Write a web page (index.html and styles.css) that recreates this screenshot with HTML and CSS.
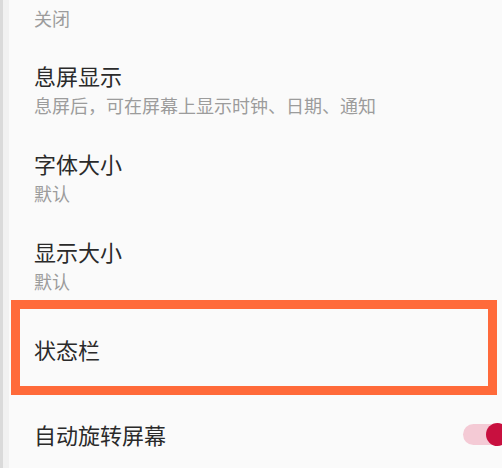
FILE: index.html
```html
<!DOCTYPE html>
<html lang="zh-CN">
<head>
<meta charset="utf-8">
<link rel="stylesheet" href="styles.css">
</head>
<body>
<div class="screen">
  <div class="inner">
    <div class="row row-first">
      <div class="sub">关闭</div>
    </div>
    <div class="row">
      <div class="title">息屏显示</div>
      <div class="sub">息屏后，可在屏幕上显示时钟、日期、通知</div>
    </div>
    <div class="row">
      <div class="title">字体大小</div>
      <div class="sub">默认</div>
    </div>
    <div class="row">
      <div class="title">显示大小</div>
      <div class="sub">默认</div>
    </div>
    <div class="highlight">
      <div class="title">状态栏</div>
    </div>
    <div class="row row-switch">
      <div class="title">自动旋转屏幕</div>
      <div class="toggle"><span class="thumb"></span></div>
    </div>
  </div>
</div>
</body>
</html>
```
FILE: styles.css
```css
html, body {
  margin: 0;
  padding: 0;
  background: #fafafa;
  overflow: hidden;
}
body {
  width: 502px;
  height: 468px;
  font-family: "Noto Sans CJK SC", "Noto Sans", sans-serif;
}
.screen {
  border-left: 3px solid #dadada;
  height: 468px;
  overflow: hidden;
}
.inner {
  border-left: 6px solid #f1f1f1;
  height: 100%;
}
.row {
  padding: 24px 0 7px 25px;
}
.row-first {
  padding-top: 3px;
  padding-bottom: 6px;
}
.title {
  font-size: 22px;
  line-height: 30px;
  color: #2a2a2a;
}
.sub {
  font-size: 18px;
  line-height: 24px;
  margin-top: 3px;
  color: #9c9c9c;
}
.highlight {
  margin: 0 5px 0 2px;
  border: 9px solid #ff6a3a;
  padding: 25px 0 22px 14px;
}
.row-switch {
  display: flex;
  align-items: center;
  justify-content: space-between;
}
.toggle {
  position: relative;
  width: 46px;
  height: 21px;
  border-radius: 11px;
  background: #f4cad5;
  margin-right: -7px;
  flex: none;
}
.thumb {
  position: absolute;
  right: 0;
  top: -1px;
  width: 23px;
  height: 23px;
  border-radius: 50%;
  background: #c8103f;
}
```
